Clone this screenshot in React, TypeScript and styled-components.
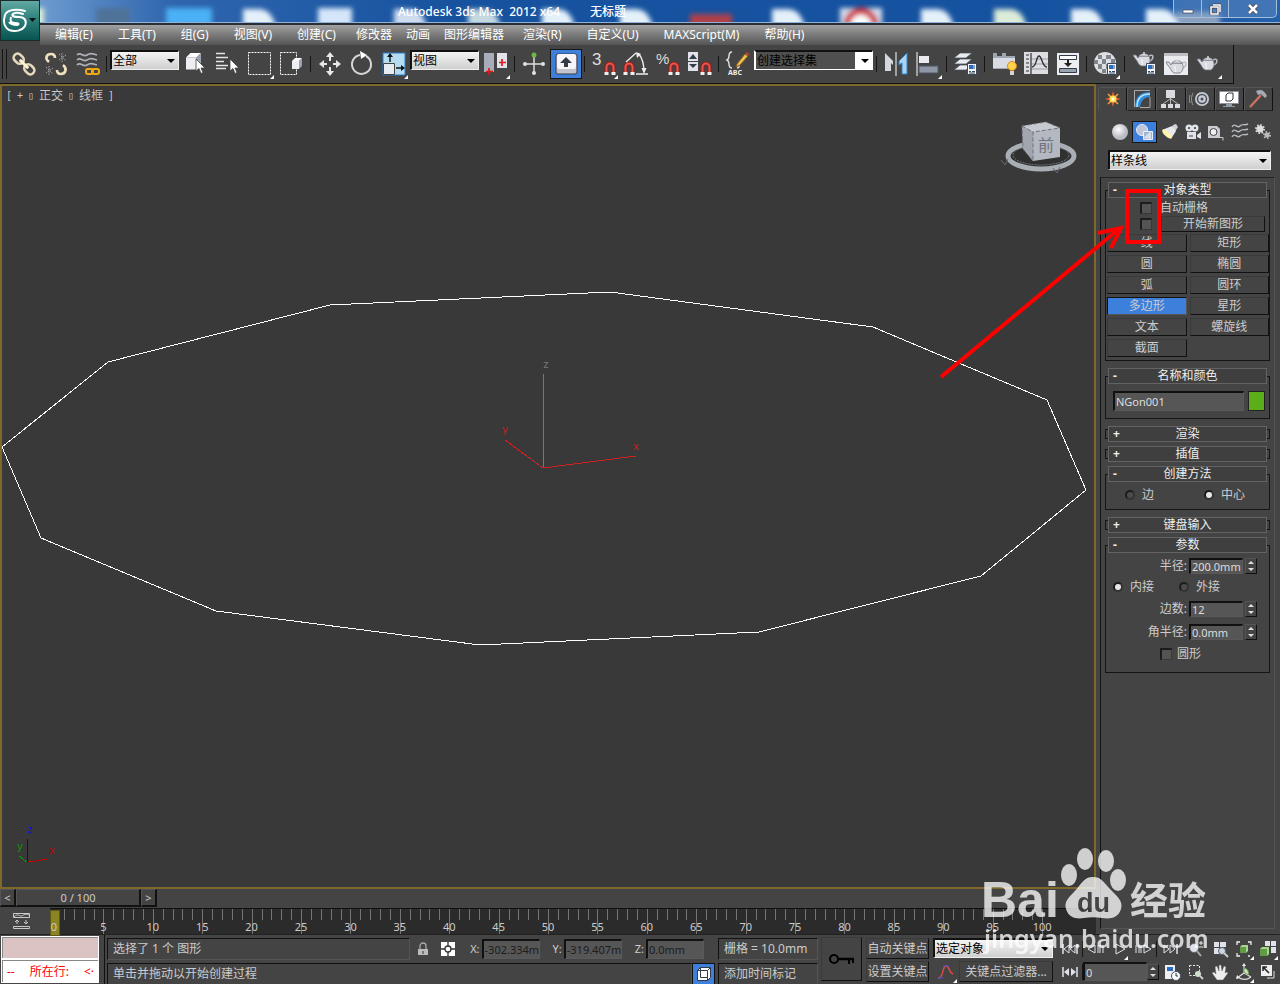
import React from 'react';
import styled, { createGlobalStyle, css } from 'styled-components';

const Global = createGlobalStyle`
  * { box-sizing: border-box; }
  body { margin: 0; background: #444; }
  body, button, input, select {
    font-family: "Noto Sans", "Noto Sans CJK SC", sans-serif;
    font-size: 12px;
    line-height: 16px;
    color: #ccc;
  }
  button, input, select { margin: 0; padding: 0; border: 0; border-radius: 0; outline: 0; }
  svg { display: block; flex: none; }
`;

/* ---------- frame ---------- */

const Page = styled.div`
  position: relative;
  display: flex;
  flex-direction: column;
  min-height: 100vh;
  min-width: 1280px;
  overflow: hidden;
  background: #444;
`;

const Header = styled.header`
  display: flex;
  align-items: flex-start;
  background: #444;
`;

const AppButton = styled.button`
  flex: none;
  width: 40px;
  height: 41px;
  padding: 1px;
  background: #1d2b2b;
`;

const HeaderBars = styled.div`
  flex: 1;
  min-width: 0;
`;

const TitleBar = styled.div`
  position: relative;
  display: flex;
  justify-content: space-between;
  height: 25px;
  overflow: hidden;
  border-bottom: 2px solid #2a2d33;
  background: linear-gradient(90deg, #6d9bcf 0, #2f66ae 130px, #17529f 420px, #1552a0 1000px, #2560aa 100%);
`;

const Backdrop = styled.svg`
  position: absolute;
  inset: 0;
  width: 100%;
  height: 23px;
  border-bottom: 1px solid #8fb4dc;
`;

const Title = styled.h1`
  position: relative;
  display: flex;
  gap: 30px;
  margin: 4px 0 0 358px;
  font-size: 12px;
  font-weight: 500;
  line-height: 16px;
  color: #fff;
  white-space: pre;
`;

const WindowButtons = styled.div`
  position: relative;
  display: flex;
  height: 18px;
  margin-right: 3px;
  border: 1px solid #a3bddb;
  border-top: 0;
  border-radius: 0 0 5px 5px;
  background: rgba(120, 160, 205, 0.35);
`;

const WindowButton = styled.button<{ $wide?: boolean }>`
  display: flex;
  align-items: center;
  justify-content: center;
  width: ${p => (p.$wide ? 48 : 27)}px;
  background: none;
  & + & { border-left: 1px solid #a3bddb; }
`;

const MenuBar = styled.nav`
  display: flex;
  height: 20px;
  padding-left: 3px;
  background: linear-gradient(#a2a2a2, #7d7d7d 45%, #555);
`;

const MenuItem = styled.button<{ $tight?: boolean }>`
  padding: ${p => (p.$tight ? '0 7px' : '0 13px 0 12px')};
  background: none;
  color: #fff;
  white-space: nowrap;
`;

/* ---------- toolbar ---------- */

const Toolbar = styled.div`
  display: flex;
  align-items: center;
  align-self: flex-start;
  height: 39px;
  padding: 0 9px 0 2px;
  border-right: 1px solid #111;
  border-bottom: 1px solid #111;
`;

const Grip = styled.span`
  width: 5px;
  height: 30px;
  border-left: 1px solid #161616;
  border-right: 1px solid #161616;
  margin-right: 1px;
`;

const ToolSep = styled.span`
  width: 6px;
  height: 16px;
  border-left: 2px solid transparent;
  border-right: 3px solid transparent;
  background: #161616 content-box;
  background-clip: padding-box;
`;

const ToolButton = styled.button<{ $on?: boolean }>`
  position: relative;
  display: flex;
  align-items: center;
  justify-content: center;
  width: 32px;
  height: 30px;
  background: none;
  ${p => p.$on && css`
    background: #3d80dc padding-box;
    border: 1px solid #161616;
  `}
`;

const Flyout = styled.span`
  position: absolute;
  right: 2px;
  bottom: 0;
  border-style: solid;
  border-width: 0 0 4px 4px;
  border-color: transparent transparent #fff transparent;
`;

const SelectBox = styled.span<{ $w: number; $h?: number; $dark?: boolean }>`
  position: relative;
  display: flex;
  flex: none;
  width: ${p => p.$w}px;
  height: ${p => p.$h ?? 20}px;
  border: 1px solid #eee;
  border-top: 2px solid #111;
  border-left: 2px solid #111;
  background: ${p => (p.$dark ? 'linear-gradient(90deg, #4f4f4f calc(100% - 17px), #fff calc(100% - 17px))' : 'linear-gradient(#f4f4f4, #cfcfcf)')};
  ${p => p.$dark && css`border-color: #111 #fff #fff #fff;`}
  &::after {
    content: '';
    position: absolute;
    right: 3px;
    top: 50%;
    margin-top: -2px;
    border: 4px solid transparent;
    border-top-color: #000;
    border-bottom: 0;
    pointer-events: none;
  }
`;

const Select = styled.select`
  appearance: none;
  width: 100%;
  padding-left: 1px;
  background: none;
  color: #000;
  line-height: 16px;
`;

const ToolSelect = styled(SelectBox)`
  margin: 0 1px 8px 0;
`;

/* ---------- workspace ---------- */

const Workspace = styled.main`
  display: flex;
  flex: 1;
`;

const Stage = styled.section`
  display: flex;
  flex-direction: column;
  flex: 1;
  min-width: 0;
`;

const Viewport = styled.div`
  position: relative;
  flex: 1;
  min-height: 400px;
  border: 2px solid #7e682a;
  background: #393939;
`;

const ViewportLabel = styled.div`
  position: relative;
  display: flex;
  gap: 5px;
  padding: 2px 4px;
  color: #c8c8c8;
`;

const Mono = styled.span`
  width: 6px;
  font-family: "DejaVu Sans Mono", monospace;
  font-size: 10px;
`;

const Scene = styled.svg`
  position: absolute;
  inset: 0;
  width: 100%;
  height: 100%;
  font-family: "Liberation Mono", monospace;
  font-size: 10px;
`;

const SliderRow = styled.div`
  display: flex;
  height: 19px;
  padding-bottom: 1px;
  font-size: 11px;
`;

const SliderButton = styled.button<{ $w: number }>`
  width: ${p => p.$w}px;
  height: 18px;
  border: 1px solid #555;
  border-right: 2px solid #111;
  border-bottom: 2px solid #111;
  background: #444;
  font-size: 11px;
  line-height: 15px;
`;

const Track = styled.div`
  display: flex;
  height: 26px;
`;

const TrackIcon = styled.button`
  display: flex;
  align-items: center;
  width: 50px;
  padding-left: 12px;
  background: none;
`;

const Ruler = styled.div`
  display: grid;
  grid-template-columns: repeat(101, 1fr);
  flex: 1;
  padding: 0 44px 0 4px;
  border-top: 1px solid #111;
  background: #2b2b2b;
  font-size: 11px;
`;

const Tick = styled.span<{ $major?: boolean; $head?: boolean }>`
  position: relative;
  min-width: 0;
  &::before {
    content: '';
    position: absolute;
    left: 0;
    top: 0;
    width: 1px;
    height: ${p => (p.$major ? 25 : 11)}px;
    background: #757575;
  }
  ${p => p.$head && css`
    &::before {
      left: -4px;
      top: 1px;
      width: 8px;
      height: 24px;
      background: #8c8322;
      border: 1px solid #5f5816;
    }
  `}
`;

const TickLabel = styled.span`
  position: absolute;
  top: 10px;
  left: -15px;
  width: 30px;
  text-align: center;
`;

/* ---------- command panel ---------- */

const Panel = styled.aside`
  display: flex;
  flex-direction: column;
  flex: none;
  width: 184px;
  padding: 3px 0 5px 2px;
`;

const Tabs = styled.div`
  display: flex;
  padding-right: 7px;
  height: 24px;
`;

const Tab = styled.button<{ $on?: boolean }>`
  display: flex;
  align-items: center;
  justify-content: center;
  flex: 1;
  height: 24px;
  border: 1px solid #555;
  border-bottom-color: ${p => (p.$on ? '#444' : '#222')};
  border-right: 1px solid #111;
  border-radius: 3px 3px 0 0;
  background: #444;
`;

const Categories = styled.div`
  display: flex;
  margin: 10px 5px 0 10px;
`;

const Category = styled.button<{ $on?: boolean }>`
  display: flex;
  align-items: center;
  justify-content: center;
  flex: 1;
  height: 22px;
  background: none;
  ${p => p.$on && css`
    background: #3d80dc padding-box;
    border: 1px solid #161616;
  `}
`;

const PanelSelect = styled.div`
  display: flex;
  padding: 7px 0 7px 10px;
`;

const Rollouts = styled.div`
  flex: 1;
  display: flex;
  flex-direction: column;
  gap: 4px;
  margin: 0 5px 0 2px;
  padding: 4px 4px 0 4px;
  border: 1px solid #555;
  border-left-color: #111;
  border-top-color: #222;
`;

const RolloutBox = styled.section<{ $open?: boolean }>`
  padding-bottom: ${p => (p.$open ? 3 : 0)}px;
`;

const RolloutHead = styled.button`
  position: relative;
  display: flex;
  align-items: center;
  width: calc(100% - 6px);
  height: 16px;
  margin: 0 3px;
  padding: 0 4px;
  border: 1px solid #636363;
  background: #3f3f3f;
  color: #eee;
  line-height: 14px;
`;

const Sign = styled.span`
  width: 8px;
  font-weight: 700;
  text-align: left;
`;

const HeadText = styled.span`
  flex: 1;
  margin-right: 8px;
  text-align: center;
`;

const Frame = styled.div<{ $open?: boolean }>`
  border: 1px solid #151515;
  ${p => (p.$open
    ? css`margin-top: -8px; padding-top: 8px;`
    : css`height: 10px; margin: -13px 0 3px;`)}
`;

const Check = styled.input.attrs({ type: 'checkbox' })`
  appearance: none;
  flex: none;
  width: 12px;
  height: 12px;
  border: 2px solid #1c1c1c;
  border-right: 1px solid #383838;
  border-bottom: 1px solid #383838;
  background: #545454;
`;

const Radio = styled.input.attrs({ type: 'radio' })`
  appearance: none;
  flex: none;
  width: 10px;
  height: 10px;
  border: 2px solid #1c1c1c;
  border-right-color: #333;
  border-bottom-color: #333;
  border-radius: 50%;
  background: #4c4c4c;
  &:checked { background: #e8e8e8; }
`;

const Line = styled.div<{ $h: number; $left?: number; $gap?: number }>`
  display: flex;
  align-items: center;
  gap: ${p => p.$gap ?? 8}px;
  height: ${p => p.$h}px;
  padding-left: ${p => p.$left ?? 0}px;
`;

const Raised = css`
  border: 1px solid #3a3a3a;
  border-right: 1px solid #111;
  border-bottom: 1px solid #111;
  background: #444;
  color: #ccc;
  white-space: nowrap;
`;

const WideButton = styled.button`
  ${Raised}
  width: 104px;
  height: 16px;
  line-height: 12px;
`;

const TypeGrid = styled.div`
  display: grid;
  grid-template-columns: 1fr 1fr;
  gap: 3px 3px;
  padding: 2px 0 3px 1px;
`;

const TypeButton = styled.button<{ $on?: boolean }>`
  ${Raised}
  height: 18px;
  line-height: 14px;
  ${p => p.$on && css`
    border: 1px solid #111;
    border-right-color: #555;
    border-bottom: 1px solid #555;
    background: #3d80dc;
  `}
`;

const NameRow = styled.div`
  display: flex;
  gap: 4px;
  padding: 6px 4px 7px 7px;
`;

const Field = styled.input<{ $w?: number; $h?: number; $dim?: boolean }>`
  ${p => (p.$w ? css`flex: none; width: ${p.$w}px;` : css`flex: 1; min-width: 0;`)}
  height: ${p => p.$h ?? 16}px;
  padding-left: 1px;
  border: 1px solid #5a5a5a;
  border-top: 2px solid #111;
  border-left: 2px solid #111;
  background: #565656;
  color: ${p => (p.$dim ? '#1c1c1c' : '#ddd')};
  font-size: 11px;
  line-height: 13px;
`;

const Swatch = styled.button`
  width: 17px;
  height: 20px;
  border: 1px solid #222;
  background: #5aae1a;
`;

const RadioRow = styled.div<{ $pad: string; $second: number }>`
  display: grid;
  grid-template-columns: ${p => p.$second}px 1fr;
  padding: ${p => p.$pad};
`;

const Option = styled.label`
  display: flex;
  align-items: center;
  gap: 7px;
  height: 18px;
`;

const Param = styled.label<{ $h: number }>`
  display: flex;
  align-items: center;
  justify-content: flex-end;
  gap: 2px;
  height: ${p => p.$h}px;
  padding-right: 12px;
`;

const SpinBox = styled.span<{ $h: number }>`
  display: grid;
  grid-template-rows: 1fr 1fr;
  flex: none;
  width: 12px;
  height: ${p => p.$h}px;
  border: 1px solid #555;
  border-right-color: #111;
  border-bottom-color: #111;
`;

const Arrow = styled.button<{ $down?: boolean }>`
  display: flex;
  align-items: center;
  justify-content: center;
  min-height: 0;
  background: none;
  &::before {
    content: '';
    border: 3px solid transparent;
    ${p => (p.$down ? css`border-top-color: #ddd; border-bottom: 0;` : css`border-bottom-color: #ddd; border-top: 0;`)}
  }
`;

/* ---------- status bar ---------- */

const StatusBar = styled.footer`
  display: flex;
  height: 50px;
  padding-left: 1px;
  border-top: 1px solid #222;
`;

const Listener = styled.div`
  display: grid;
  grid-template-rows: 21px 22px;
  gap: 2px;
  width: 98px;
  height: 47px;
  margin: 1px 5px 0 0;
  padding: 1px;
  background: #fff;
`;

const ListenerLine = styled.div<{ $pink?: boolean }>`
  display: flex;
  align-items: center;
  justify-content: space-between;
  padding: 0 4px;
  border-top: 1px solid #888;
  border-left: 1px solid #888;
  background: ${p => (p.$pink ? '#dcc3c3' : '#fff')};
  color: #f00;
  line-height: 14px;
`;

const Messages = styled.div`
  display: grid;
  grid-template-rows: 22px 22px;
  gap: 3px;
  flex: 1;
  min-width: 0;
  padding: 3px 3px 0 2px;
  border-left: 1px solid #111;
`;

const MessageRow = styled.div`
  display: flex;
  align-items: center;
  min-width: 0;
`;

const Sunken = styled.div`
  flex: 1;
  height: 22px;
  padding: 0 5px;
  border: 1px solid #555;
  border-top: 1px solid #111;
  border-left: 1px solid #111;
  line-height: 19px;
  white-space: nowrap;
`;

const Coord = styled.label`
  display: flex;
  align-items: center;
  gap: 2px;
  margin-left: 13px;
  font-size: 11px;
`;

const IconSlot = styled.button<{ $w: number; $on?: boolean }>`
  position: relative;
  display: flex;
  align-items: center;
  justify-content: center;
  flex: none;
  width: ${p => p.$w}px;
  height: 22px;
  background: none;
  ${p => p.$on && css`
    background: #3d80dc padding-box;
    border: 1px solid #111;
  `}
`;

const Stack = styled.div<{ $w: number; $left: number }>`
  display: grid;
  grid-template-rows: 21px 21px;
  gap: 2px;
  flex: none;
  width: ${p => p.$w}px;
  margin: 3px 0 0 ${p => p.$left}px;
`;

const GridInfo = styled(Stack)`
  grid-template-rows: 22px 22px;
  gap: 3px;
`;

const KeyButton = styled.button`
  ${Raised}
  display: flex;
  align-items: center;
  justify-content: center;
  flex: none;
  width: 41px;
  height: 44px;
  margin: 2px 0 0 3px;
`;

const StatusButton = styled.button`
  ${Raised}
  height: 21px;
  flex: 1;
`;

const StackRow = styled.div`
  display: flex;
  align-items: center;
`;

const Bar = styled.span`
  flex: none;
  width: 1px;
  height: 16px;
  background: #161616;
`;

/* ---------- overlays ---------- */

const Callout = styled.svg`
  position: absolute;
  top: 180px;
  right: 0;
  pointer-events: none;
`;

const Watermark = styled.svg`
  position: absolute;
  right: 60px;
  bottom: 20px;
  pointer-events: none;
  opacity: 0.76;
`;

/* ---------- drawings ---------- */

const L = '#dfe2e8';
const D = '#5b6472';

const Svg = ({ s = 28, children }: { s?: number; children: React.ReactNode }) => (
  <svg width={s} height={s} viewBox={`0 0 ${s} ${s}`} fill="none">{children}</svg>
);

const Magnet = ({ x = 15, y = 11 }) => (
  <g transform={`translate(${x} ${y})`}>
    <path d="M2.500 12V6a3.500 3.500 0 0 1 7 0V12" stroke="#8e1c1c" strokeWidth="4" />
    <path d="M2.500 12V6a3.500 3.500 0 0 1 7 0V12" stroke="#e8564c" strokeWidth="2" />
    <path d="M.5 11h4v3h-4zM7.500 11h4v3h-4z" fill="#eee" />
  </g>
);

const Pot = ({ x = 0, y = 0 }) => (
  <g transform={`translate(${x} ${y})`}>
    <path d="M16 5c5-3 5 3 1 5" stroke="#b9bcc2" strokeWidth="1.500" />
    <path d="M6 5h10c2 4 1 8-2 10H8C6 14 5 12 4 10L1 6 0 4h3l2 3z" fill="#d9dbe0" stroke="#70757f" strokeWidth=".8" />
    <path d="M6 5c1-3 9-3 10 0z" fill="#f4f4f6" stroke="#70757f" strokeWidth=".8" />
    <circle cx="11" cy="2" r="1" fill="#d9dbe0" />
    <path d="M9 8c0 3 0 4 1 6" stroke="#fff" />
  </g>
);

const Card = ({ x = 15, y = 13 }) => (
  <g transform={`translate(${x} ${y})`}>
    <path d="M.5.5h9v11h-9z" fill="#f3f5f8" stroke="#3d4958" />
    <path d="M2 2h4v4H2z" fill="#2b6cc0" />
    <path d="M7 2v4M2 8.500h2M5 8.500h3M2 10h6" stroke="#33475e" />
  </g>
);

const Cursor = ({ x = 13, y = 8 }) => (
  <path transform={`translate(${x} ${y})`} d="M0 0v12l3-2.500 2 5 2-1-2-4.500h4z" fill="#fff" stroke="#444" strokeWidth=".8" />
);

const Cube = ({ x, y, s }: { x: number; y: number; s: number }) => (
  <g transform={`translate(${x} ${y}) scale(${s})`}>
    <path d="M0 3h7v8H0z" fill="#eceef2" />
    <path d="M0 3l3-3h7L7 3z" fill="#fff" />
    <path d="M7 3l3-3v8l-3 3z" fill="#9ba3b3" />
  </g>
);

const icons: Record<string, React.ReactNode> = {
  link: <Svg><g transform="rotate(45 14 14)" stroke="#e6d9bd"><rect x="1" y="10" width="11" height="8" rx="4" strokeWidth="2.600" /><rect x="16" y="10" width="11" height="8" rx="4" strokeWidth="2.600" /><path d="M8 14h12" stroke="#fff3d5" strokeWidth="3" /></g></Svg>,
  unlink: <Svg><path d="M7 12c-5-4-2-8 2-8 3 0 4 2 4 4" stroke="#f0e0be" strokeWidth="2.600" /><path d="M21 15c5 4 2 9-2 9-3 0-4-2-4-4" stroke="#f0e0be" strokeWidth="2.600" /><path d="M17 4l7 7M20 3v9M24 5l-7 5M4 17l7 7M7 16v9M11 18l-7 5" stroke="#a5a5a5" strokeDasharray="1.500 1" /></Svg>,
  bind: <Svg>{[5, 10, 15].map(y => <path key={y} d={`M3 ${y}c4-4 6 3 10 0s6-1 10 0`} stroke="#aeb2b8" strokeWidth="1.600" />)}<rect x="12" y="19" width="7" height="5" rx="2" stroke="#f2a90f" strokeWidth="2" /><rect x="18" y="19" width="7" height="5" rx="2" stroke="#f2a90f" strokeWidth="2" /></Svg>,
  select: <Svg><Cube x={4} y={3} s={1.5} /><Cursor x={14} y={9} /></Svg>,
  byName: <Svg><path d="M2 3.500h9M2 7.500h12M2 11.500h8M2 15.500h12M2 18.500h10" stroke="#e4e4e4" strokeWidth="1.300" /><Cursor x={16} y={9} /></Svg>,
  rect: <Svg><rect x="2.500" y="2.500" width="22" height="22" stroke="#fff" strokeDasharray="2 1" /></Svg>,
  window: <Svg><rect x="2.500" y="2.500" width="16" height="22" stroke="#fff" strokeDasharray="2 1" /><Cube x={14} y={8} s={1} /></Svg>,
  move: <Svg><path d="M14 2l4 5h-3v4h-2V7h-3zM14 26l4-5h-3v-4h-2v4h-3zM3 14l5-4v3h3v2H8v3zM25 14l-5-4v3h-3v2h3v3z" fill="#e6e8ec" /></Svg>,
  rotate: <Svg><path d="M18 6a9.500 9.500 0 1 1-6-1" stroke="#d6d6d6" strokeWidth="2" /><path d="M12 1l7 4-6 4z" fill="#fff" /></Svg>,
  scale: <Svg><path d="M3 3h22v22H3z" fill="#b5ddf2" stroke="#2a7bc8" /><path d="M3.500 13.500h11v11h-11z" fill="#e7ecf3" stroke="#444" /><path d="M10 12V6M16 18h6" stroke="#111" strokeWidth="1.400" /><path d="M10 3l3 4H7zM25 18l-4 3v-6z" fill="#111" /></Svg>,
  pivot: <Svg><path d="M2 3h10v19H2z" fill="#a8adb9" /><path d="M15 3h10v15H15z" fill="#e2e4ea" /><path d="M7 18v7M4 21.500h7M20 9v7M17 12.500h7" stroke="#e01818" strokeWidth="1.700" /></Svg>,
  manip: <Svg><path d="M14 6v16M5 14h18" stroke="#ddd" strokeWidth="1.500" /><circle cx="14" cy="5" r="2.500" fill="#6fb544" /><circle cx="5" cy="14" r="2" fill={L} /><circle cx="23" cy="14" r="2" fill={L} /><circle cx="14" cy="23" r="2" fill={L} /></Svg>,
  keyboard: <Svg><rect x="4" y="4" width="21" height="20" rx="2" fill="#c1c4cc" stroke="#333b48" /><rect x="5" y="4" width="19" height="15" rx="2" fill="#f5f5f8" /><path d="M14 7l6 6h-4v4h-4v-4H8z" fill="#333b48" /></Svg>,
  snap: <Svg><text x="2" y="15" fill="#ddd" fontSize="17" fontFamily="Liberation Sans, sans-serif">3</text><Magnet x={14} y={11} /></Svg>,
  angle: <Svg><Magnet x={1} y={11} /><path d="M4 12L14 3M14 24h12M17 4c3 4 5 10 5 18" stroke="#eee" strokeWidth="1.300" /><path d="M14 2l5 2-4 4zM19.500 18h5l-2.500 6z" fill="#eee" /></Svg>,
  percent: <Svg><text x="2" y="14" fill="#ddd" fontSize="15" fontFamily="Liberation Sans, sans-serif">%</text><Magnet x={14} y={11} /></Svg>,
  spinner: <Svg><path d="M2 2h10v9H2zM2 12h10v9H2z" fill="#e0e2e8" /><path d="M7 4l4 5H3zM7 18l4-4H3z" fill="#333b48" /><Magnet x={14} y={11} /></Svg>,
  abc: <Svg><path d="M8 2c-3 0-3 2-3 4s0 3-2 4c2 1 2 2 2 4s0 4 3 4M13 18c3 0 2-3 2-5" stroke="#ddd" strokeWidth="1.500" /><path d="M13 14L21 4l3 2-8 9-4 2z" fill="#eec24c" stroke="#8b5a1c" /><path d="M21 4l1.500-2 3 2L24 6z" fill="#b14a35" /><text x="4" y="25" fill="#eee" fontSize="7" fontWeight="700">ABC</text></Svg>,
  mirror: <Svg><path d="M3 3l8 8v4l-2-2v8H3z" fill="#d5d7de" /><path d="M14 2v24" stroke="#fff" /><path d="M25 3l-8 8v4l3-2v11h5z" fill="#a9d3f0" stroke="#2f83cc" /></Svg>,
  align: <Svg><path d="M3 2v24" stroke="#fff" /><path d="M5 6h10v7H5z" fill="#e9ebef" /><path d="M5 16h19v7H5z" fill="#8f96a5" stroke="#4e5665" /></Svg>,
  layers: <Svg>{[15, 9, 3].map(y => <path key={y} d={`M2 ${y + 5}l6-5h12l-6 5z`} fill="#e9ebef" stroke="#444b57" strokeWidth=".7" />)}<Card x={15} y={13} /></Svg>,
  ribbon: <Svg><path d="M3 3h4v3h5V3h4v3h9v13H3z" fill="#a0a6b2" /><path d="M3 8h22v10H3z" fill="#d9dce2" /><circle cx="22" cy="16" r="4.500" fill="#ffd34d" stroke="#d98a1c" /><path d="M20 21h4v4h-4z" fill="#d5d5d5" /></Svg>,
  curve: <Svg><path d="M2 2h24v22H2z" fill="#dcdee2" /><path d="M9 3v21M9 9h17M9 14h17M9 19h17" stroke="#9b9da3" /><path d="M4 5h3M4 9h3M4 13h3M4 17h3M4 21h3M9 3v21" stroke="#2c2c2c" /><path d="M10 17c5 0 4-11 7-11s3 11 8 11" stroke="#2a2a2a" strokeWidth="1.300" /></Svg>,
  schematic: <Svg><path d="M3 3h22v22H3z" fill="#eceef1" /><path d="M5.500 5.500h17v4h-17zM5.500 18.500h17v4h-17z" fill="#fff" stroke="#333b48" /><path d="M6 19h16v3H6z" fill="#9aa3b0" /><path d="M14 10v4" stroke="#222" strokeWidth="2" /><path d="M14 17l4-4h-8z" fill="#222" /></Svg>,
  material: <Svg><circle cx="13" cy="13" r="11" fill="#dddfe3" /><path d="M6 5h4v4H6zM14 5h5v4h-5zM2 10h4v4H2zM10 9h4v5h-4zM19 9h4v5h-4zM6 14h4v5H6zM14 14h5v5h-5zM10 19h4v4h-4z" fill="#7f848d" /><Card /></Svg>,
  setup: <Svg><Pot x={3} y={1} /><Card x={16} y={13} /></Svg>,
  frame: <Svg><path d="M2 3h24v22H2z" fill="#ebecef" /><path d="M2 3h24v3H2z" fill="#bfc0c4" /><Pot x={4} y={8} /></Svg>,
  render: <Svg><Pot x={3} y={5} /></Svg>,

  create: <Svg s={22}><path d="M11 3l2 6 6 2-6 2-2 6-2-6-6-2 6-2z" fill="#e2572f" /><path d="M6 6l10 10M16 6L6 16" stroke="#f1a13b" strokeWidth="1.500" /><circle cx="11" cy="11" r="3.500" fill="#ffdc4e" /><circle cx="11" cy="11" r="1.500" fill="#fff" /></Svg>,
  modify: <Svg s={22}><path d="M4 19C4 9 9 4 19 4v5c-6 0-9 4-10 10z" fill="#2f8edb" /><path d="M6 19C6 10 10 6 19 6" stroke="#bfe2fa" strokeWidth="1.500" /><path d="M3.500 19V2.500H19M9 19.500h10V9" stroke="#a9a9a9" /></Svg>,
  hierarchy: <Svg s={22}><path d="M6 2h9v8H6z" fill="#d9dbe0" /><path d="M10.500 10v6M10 11l-7 5M11 11l7 5" stroke="#bbb" /><path d="M1 16h5v4H1zM8 16h5v4H8zM15 16h5v4h-5z" fill="#d9dbe0" /></Svg>,
  motion: <Svg s={22}><circle cx="13" cy="11" r="7" fill="#c9ccd3" /><circle cx="13" cy="11" r="4.500" stroke="#4a505b" strokeWidth="1.500" /><circle cx="13" cy="11" r="1.500" fill="#4a505b" /><path d="M4 5c-2 4-2 8 0 12M1 7c-1 3-1 5 0 8" stroke="#999" /></Svg>,
  display: <Svg s={22}><path d="M1.500 3.500h19v12h-19z" fill="#fff" stroke="#8d929d" /><path d="M8 7l2-2h5v6l-2 2H8z" stroke="#333" /><path d="M8 16h6v2h3v1H5v-1h3z" fill="#9298a4" /></Svg>,
  utilities: <Svg s={22}><path d="M3 19L14 7" stroke="#c97260" strokeWidth="2.500" /><path d="M9 3c5-2 8-1 11 5l-2 2-4-4-3 1z" fill="#a5aab3" /></Svg>,

  geometry: <Svg s={20}><defs><radialGradient id="ball" cx=".4" cy=".35"><stop offset="0" stopColor="#fff" /><stop offset="1" stopColor="#b9bcc3" /></radialGradient></defs><circle cx="10" cy="10" r="8" fill="url(#ball)" /></Svg>,
  shapes: <Svg s={20}><circle cx="8" cy="8" r="5.500" fill="#bcc6d6" stroke="#eef" /><path d="M9.500 9.500h9v8h-9z" fill="#9fb4d3" stroke="#eef" /><path d="M9 16l8-7v8z" fill="#d8deea" /></Svg>,
  lights: <Svg s={20}><path d="M12 8l2-5 3-1 2 3-4 6z" fill="#cfd3dc" /><path d="M3 8l10-4 4 5-5 8z" fill="#e8e9ec" /><ellipse cx="8" cy="12" rx="6" ry="2.500" transform="rotate(42 8 12)" fill="#fff3b0" /></Svg>,
  cameras: <Svg s={20}><circle cx="6" cy="6" r="3.500" fill={L} /><circle cx="12" cy="6" r="3.500" fill={L} /><path d="M4 10h9v7H4zM14 13l4-3v7l-4-2z" fill={L} /><circle cx="6" cy="6" r="1" fill="#333" /><circle cx="12" cy="6" r="1" fill="#333" /><path d="M6 14h4" stroke="#444" /></Svg>,
  helpers: <Svg s={20}><path d="M2 4h9l3 3v9H2z" fill="#c9ccd2" /><circle cx="7.500" cy="10" r="3.500" fill="#eee" stroke="#444" /><path d="M9 15.500h8v3" stroke="#ccc" /></Svg>,
  space: <Svg s={20}>{[4, 9, 14].map(y => <path key={y} d={`M2 ${y + 1}c3-5 5 2 8-1s4 0 8-2`} stroke="#b6bac0" strokeWidth="1.400" />)}</Svg>,
  systems: <Svg s={20}><circle cx="7" cy="7" r="3.500" fill="#ddd" /><circle cx="7" cy="7" r="4" stroke="#ddd" strokeWidth="2" strokeDasharray="1.500 1.600" /><circle cx="14" cy="13" r="2.500" fill="#bbb" /><circle cx="14" cy="13" r="3" stroke="#bbb" strokeWidth="2" strokeDasharray="1.500 1.600" /></Svg>,

  lock: <Svg s={16}><path d="M5 8V5a3 3 0 0 1 6 0v3" stroke="#aaa" strokeWidth="1.300" /><path d="M3 8h10v6H3z" fill="#bbb" /><path d="M8 10v3" stroke="#333" /></Svg>,
  offset: <Svg s={16}><path d="M1 1h14v14H1z" fill="#fff" /><circle cx="8" cy="8" r="3" stroke="#333" strokeWidth="1.300" /><path d="M8 1v4M8 11v4M1 8h4M11 8h4" stroke="#333" strokeWidth="1.300" /></Svg>,
  isolate: <Svg s={16}><path d="M1.500 4.500l3-3h10v10l-3 3h-10z" fill="#fff" stroke="#333b48" /><path d="M4.500 4.500h7v7h-7z" stroke="#333b48" /><path d="M1.500 4.500h3l0-3M11.500 4.500l3-3M11.500 11.500v3" stroke="#333b48" /></Svg>,
  key: <svg width="28" height="14" viewBox="0 0 28 14" fill="none"><circle cx="6" cy="7" r="4" stroke="#000" strokeWidth="2" /><path d="M10 7h16" stroke="#000" strokeWidth="2.500" /><path d="M21 7v5M25 7v4" stroke="#000" strokeWidth="2" /></svg>,
  tangent: <Svg s={18}><path d="M1 15c6 0 4-12 8-12s2 6 7 8" stroke="#e04848" strokeWidth="1.500" /><path d="M1 15h5M6 3h6" stroke="#3a58d0" /></Svg>,
  start: <Svg s={18}><path d="M2 4v10M16 4v10" stroke={L} strokeWidth="1.500" /><path d="M8 5v8L3 9zM14 5v8L9 9z" stroke={L} /></Svg>,
  prev: <Svg s={18}><path d="M8 5v8L1 9zM11 5v8M13 5v8M16 5v8" stroke={L} /></Svg>,
  play: <Svg s={18}><path d="M5 4v10l9-5z" stroke={L} /></Svg>,
  next: <Svg s={18}><path d="M10 5v8l7-4zM2 5v8M5 5v8M7 5v8" stroke={L} /></Svg>,
  end: <Svg s={18}><path d="M16 4v10" stroke={L} strokeWidth="1.500" /><path d="M3 5v8l5-4zM9 5v8l5-4z" stroke={L} /></Svg>,
  keyMode: <Svg s={18}><path d="M2 4v10M16 4v10" stroke={L} strokeWidth="1.500" /><path d="M8 5v8L3 9zM10 5v8l5-4z" fill={L} /></Svg>,
  time: <Svg s={18}><path d="M2 2h10v14H2z" fill="#eee" /><path d="M4 4h6v4H4z" fill="#2b6cc0" /><circle cx="13" cy="13" r="4.500" fill="#fff" stroke="#456" /><path d="M13 10v3h2" stroke="#234" /></Svg>,
  zoom: <Svg s={18}><circle cx="7" cy="8" r="4.500" fill={L} stroke={D} /><path d="M10 11l4 5" stroke="#aaa" strokeWidth="2" /><path d="M12 3h4M14 1v4M12 7h4" stroke="#eee" /></Svg>,
  zoomAll: <Svg s={18}><path d="M3 2h5v5H3zM9 2h6v5H9zM3 8h5v6H3z" fill={L} /><circle cx="11" cy="11" r="3.500" fill="#cfd6e2" stroke={D} /><path d="M13 13l4 4" stroke="#ccc" strokeWidth="2" /></Svg>,
  extents: <Svg s={18}><path d="M2 5V2h3M13 2h3v3M2 13v3h3M13 16h2" stroke="#eee" strokeWidth="1.300" /><path d="M5 7l2-2h6v6l-2 2H5z" fill="#a9d494" /><path d="M5 7h6v6H5z" fill="#5f9c45" /></Svg>,
  extentsAll: <Svg s={18}><path d="M6 1h5v5H6zM12 1h5v5h-5zM12 7h5v6h-5z" fill={L} /><path d="M1 9l2-2h7v7l-2 2H1z" fill="#a7d688" /><path d="M1 9h7v7H1z" fill="#5f9c45" /></Svg>,
  region: <Svg s={18}><rect x="2.500" y="2.500" width="10" height="10" stroke="#eee" strokeDasharray="2 1.500" /><circle cx="11" cy="11" r="3" fill="#cfe0cf" /><path d="M13 13l3 3" stroke="#ccc" strokeWidth="2" /></Svg>,
  pan: <Svg s={18}><path d="M6 17L1 10l2-1 2 2-1-7 2-1 2 5V2h2l1 6 2-5 2 1-1 6 2-1 1 1-5 7z" fill="#eee" stroke="#666" strokeWidth=".5" /></Svg>,
  orbit: <Svg s={18}><path d="M9 2v8M9 10l-7 5M9 10l7 4M3 14c4 3 9 3 13 0" stroke="#ddd" strokeWidth="1.200" /><path d="M9 5a5 5 0 0 1 4 7l-4-3z" fill="#cfe8c0" stroke="#6ea153" /><path d="M9 0l2 3H7zM1 16l1-4 3 3z" fill="#eee" /></Svg>,
  maximize: <Svg s={18}><path d="M2 2h11v11H2z" fill="#eee" /><path d="M4 4l6 6M4 8V4h4" stroke="#222" strokeWidth="1.500" /><path d="M15 8v7H8" stroke="#ddd" /></Svg>,
};

const Tool = ({ name, label, on, fly }: { name: string; label: string; on?: boolean; fly?: boolean }) => (
  <ToolButton $on={on} aria-label={label}>{icons[name]}{fly && <Flyout />}</ToolButton>
);

const Mini = ({ name, label, w = 24, fly, on }: { name: string; label: string; w?: number; fly?: boolean; on?: boolean }) => (
  <IconSlot $w={w} $on={on} aria-label={label}>{icons[name]}{fly && <Flyout />}</IconSlot>
);

const Spinner = ({ h = 16 }: { h?: number }) => (
  <SpinBox $h={h}>
    <Arrow type="button" aria-label="增加" />
    <Arrow type="button" $down aria-label="减少" />
  </SpinBox>
);

const Rollout = ({ title, children }: { title: string; children?: React.ReactNode }) => (
  <RolloutBox $open={!!children}>
    <RolloutHead aria-expanded={!!children}>
      <Sign>{children ? '-' : '+'}</Sign>
      <HeadText>{title}</HeadText>
    </RolloutHead>
    <Frame $open={!!children}>{children}</Frame>
  </RolloutBox>
);

const page = (x: number, tint = '#e4f1fb') => (
  <path key={x} d={`M${x} 9h17c9 1 14 8 16 20H${x}z`} fill={tint} />
);

const TitleBackdrop = () => (
  <Backdrop preserveAspectRatio="xMinYMin slice">
    <defs><filter id="soft"><feGaussianBlur stdDeviation="2.500" /></filter></defs>
    <g filter="url(#soft)">
      <path d="M-8 8H4v18H-8z" fill="#dff0d8" />
      <path d="M56 8h34v20H56z" fill="#4f7299" />
      <path d="M126 8h46v18h-46z" fill="#4bb0f5" />
      <path d="M278 8h34v20h-34z" fill="#d5e6fa" />
      <path d="M650 14h42v14h-42z" fill="#b04048" />
      <path d="M800 8h42v20h-42z" fill="#d5dfee" />
      <circle cx="821" cy="25" r="14" stroke="#cf3b46" strokeWidth="7" fill="#fff" />
      <path d="M1136 12h44v14h-44z" fill="#8aa0bd" />
      {page(203)}
      {page(354, '#cfdcf0')}
      {page(428, '#c3d8df')}
      {page(502)}
      {page(580)}
      {page(732)}
      {page(881)}
      {page(954, '#dcecd9')}
      {page(1031)}
      {page(1106)}
    </g>
  </Backdrop>
);

const ViewCube = () => (
  <g>
    <ellipse cx="1041" cy="156" rx="33" ry="13" fill="#303030" stroke="#a9adb4" strokeWidth="5" />
    <ellipse cx="1041" cy="155" rx="28" ry="10" fill="none" stroke="#777b82" strokeDasharray="2 1" />
    <path d="M1022 126l24-4 14 6v29l-27 4-10-13z" fill="#b4b8c0" />
    <path d="M1022 126l24-4 14 6-27 4z" fill="#c6c9d0" />
    <path d="M1022 126l11 6v29l-10-12z" fill="#a2a6af" />
    <path d="M1022 126l11 6v29l-10-12zM1022 126l24-4 14 6-27 4" fill="none" stroke="#6e727b" strokeDasharray="4 2" />
    <text x="1038" y="151" fontSize="16" fill="#6f747e" fontFamily="Noto Sans CJK SC, sans-serif">前</text>
    <path d="M1001 160l4 5 3-6M1053 168l4 5 3-6" stroke="#666b74" fill="none" />
  </g>
);

const menus: [string, boolean?][] = [
  ['编辑(E)'], ['工具(T)'], ['组(G)'], ['视图(V)'], ['创建(C)'], ['修改器', true],
  ['动画', true], ['图形编辑器', true], ['渲染(R)'], ['自定义(U)'], ['MAXScript(M)'], ['帮助(H)'],
];

const shapeTypes = ['线', '矩形', '圆', '椭圆', '弧', '圆环', '多边形', '星形', '文本', '螺旋线', '截面'];

export default function App() {
  return (
    <Page>
      <Global />
      <Header>
        <AppButton aria-label="应用程序">
          <svg width="38" height="39" viewBox="0 0 38 39" fill="none">
            <defs><linearGradient id="teal" x2="0" y2="1"><stop stopColor="#62aaa3" /><stop offset=".5" stopColor="#2b7c78" /><stop offset="1" stopColor="#075451" /></linearGradient></defs>
            <path d="M0 0h38v39H0z" fill="url(#teal)" />
            <path d="M24 10C17 8 6 8 4 14c-2 6-1 12 4 15 6 2 13 1 16-4 2-5 0-9-6-9-5 0-8-1-6-3 2-2 7-1 10 0" stroke="#fff" strokeWidth="2" strokeLinecap="round" />
            <path d="M10 16c-1 4 0 6 4 6 3 0 5 1 2 2-3 0-6 0-8-3" stroke="#fff" strokeWidth="2" />
            <path d="M28 17h7l-3.500 4z" fill="#0a1414" />
          </svg>
        </AppButton>
        <HeaderBars>
          <TitleBar>
            <TitleBackdrop />
            <Title><span>Autodesk 3ds Max  2012 x64</span><span>无标题</span></Title>
            <WindowButtons>
              <WindowButton aria-label="最小化"><svg width="12" height="12"><path d="M1 7h10v3H1z" fill="#fff" stroke="#445" strokeWidth=".7" /></svg></WindowButton>
              <WindowButton aria-label="还原"><svg width="12" height="12" fill="none"><path d="M4 2h7v7M2 4h7v7H2z" stroke="#445" strokeWidth="3" /><path d="M4 2h7v7M2 4h7v7H2z" stroke="#fff" strokeWidth="1.500" /></svg></WindowButton>
              <WindowButton $wide aria-label="关闭"><svg width="12" height="12"><path d="M2 2l8 8M10 2l-8 8" stroke="#445" strokeWidth="4" /><path d="M2 2l8 8M10 2l-8 8" stroke="#fff" strokeWidth="2.500" /></svg></WindowButton>
            </WindowButtons>
          </TitleBar>
          <MenuBar>
            {menus.map(([t, tight]) => <MenuItem key={t} $tight={tight}>{t}</MenuItem>)}
          </MenuBar>
        </HeaderBars>
      </Header>

      <Toolbar>
        <Grip />
        <Tool name="link" label="选择并链接" />
        <Tool name="unlink" label="取消链接" />
        <Tool name="bind" label="绑定到空间扭曲" />
        <ToolSep />
        <ToolSelect $w={69}><Select aria-label="选择过滤器"><option>全部</option></Select></ToolSelect>
        <Tool name="select" label="选择对象" />
        <Tool name="byName" label="按名称选择" />
        <Tool name="rect" label="矩形选择区域" fly />
        <Tool name="window" label="窗口/交叉" />
        <ToolSep />
        <Tool name="move" label="选择并移动" />
        <Tool name="rotate" label="选择并旋转" />
        <Tool name="scale" label="选择并缩放" fly />
        <ToolSelect $w={69}><Select aria-label="参考坐标系"><option>视图</option></Select></ToolSelect>
        <Tool name="pivot" label="使用轴点中心" fly />
        <ToolSep />
        <Tool name="manip" label="选择并操纵" />
        <Tool name="keyboard" label="键盘快捷键覆盖切换" on />
        <ToolSep />
        <Tool name="snap" label="捕捉开关" fly />
        <Tool name="angle" label="角度捕捉" />
        <Tool name="percent" label="百分比捕捉" />
        <Tool name="spinner" label="微调器捕捉" />
        <ToolSep />
        <Tool name="abc" label="编辑命名选择集" />
        <ToolSelect $w={119} $dark><Select aria-label="命名选择集"><option>创建选择集</option></Select></ToolSelect>
        <ToolSep />
        <Tool name="mirror" label="镜像" />
        <Tool name="align" label="对齐" fly />
        <ToolSep />
        <Tool name="layers" label="层管理器" />
        <ToolSep />
        <Tool name="ribbon" label="石墨建模工具" />
        <Tool name="curve" label="曲线编辑器" />
        <Tool name="schematic" label="图解视图" />
        <ToolSep />
        <Tool name="material" label="材质编辑器" fly />
        <ToolSep />
        <Tool name="setup" label="渲染设置" />
        <Tool name="frame" label="渲染帧窗口" />
        <Tool name="render" label="渲染产品" fly />
      </Toolbar>

      <Workspace>
        <Stage>
          <Viewport>
            <Scene viewBox="2 86 1092 801">
              <g fill="none" shapeRendering="crispEdges">
                <path d="M2 447L108 362 330 305 610 292 873 327 1047 400 1086 490 981 576 759 632 480 645 216 611 41 538z" stroke="#fff" />
                <path d="M543.500 468V374" stroke="#777" />
                <path d="M505 440l38 28 93-12" stroke="#d02020" />
                <path d="M27.500 862v-23" stroke="#0000c8" />
                <path d="M27 862l-8-6" stroke="#009000" />
                <path d="M28 862l20-3" stroke="#c80000" />
              </g>
              <text x="543" y="368" fill="#777">z</text>
              <text x="502" y="433" fill="#d02020">y</text>
              <text x="633" y="450" fill="#d02020">x</text>
              <text x="27" y="833" fill="#1010e0">z</text>
              <text x="17" y="850" fill="#00a000">y</text>
              <text x="49" y="854" fill="#c80000">x</text>
              <ViewCube />
            </Scene>
            <ViewportLabel>
              <Mono>[</Mono><Mono>+</Mono><Mono>▯</Mono><span>正交</span><Mono>▯</Mono><span>线框</span><Mono>]</Mono>
            </ViewportLabel>
          </Viewport>
          <SliderRow>
            <SliderButton $w={16} aria-label="上一帧">&lt;</SliderButton>
            <SliderButton $w={125}>0 / 100</SliderButton>
            <SliderButton $w={16} aria-label="下一帧">&gt;</SliderButton>
          </SliderRow>
          <Track>
            <TrackIcon aria-label="打开迷你曲线编辑器">
              <svg width="20" height="18" viewBox="0 0 20 18" fill="none" stroke="#c8c8c8">
                <path d="M1.500 1.500h16v4h-16zM1.500 14.500h16v2h-16z" />
                <path d="M2 5c4-4 5-1 7-1s4-3 8-1M5 12V8M3 10l2-2 2 2M14 8v4M12 10l2 2 2-2" />
              </svg>
            </TrackIcon>
            <Ruler>
              {Array.from({ length: 101 }, (_, i) => (
                <Tick key={i} $major={i % 5 === 0} $head={i === 0}>
                  {i % 5 === 0 && <TickLabel>{i}</TickLabel>}
                </Tick>
              ))}
            </Ruler>
          </Track>
        </Stage>

        <Panel>
          <Tabs>
            <Tab $on aria-label="创建">{icons.create}</Tab>
            <Tab aria-label="修改">{icons.modify}</Tab>
            <Tab aria-label="层次">{icons.hierarchy}</Tab>
            <Tab aria-label="运动">{icons.motion}</Tab>
            <Tab aria-label="显示">{icons.display}</Tab>
            <Tab aria-label="实用程序">{icons.utilities}</Tab>
          </Tabs>
          <Categories>
            <Category aria-label="几何体">{icons.geometry}</Category>
            <Category $on aria-label="图形">{icons.shapes}</Category>
            <Category aria-label="灯光">{icons.lights}</Category>
            <Category aria-label="摄影机">{icons.cameras}</Category>
            <Category aria-label="辅助对象">{icons.helpers}</Category>
            <Category aria-label="空间扭曲">{icons.space}</Category>
            <Category aria-label="系统">{icons.systems}</Category>
          </Categories>
          <PanelSelect>
            <SelectBox $w={163}><Select aria-label="图形类别"><option>样条线</option></Select></SelectBox>
          </PanelSelect>

          <Rollouts>
            <Rollout title="对象类型">
              <Line as="label" $h={17} $left={34}><Check />自动栅格</Line>
              <Line $h={16} $left={34} $gap={9}>
                <Check aria-label="开始新图形" />
                <WideButton>开始新图形</WideButton>
              </Line>
              <TypeGrid>
                {shapeTypes.map(t => <TypeButton key={t} $on={t === '多边形'}>{t}</TypeButton>)}
              </TypeGrid>
            </Rollout>
            <Rollout title="名称和颜色">
              <NameRow>
                <Field aria-label="名称" $h={20} defaultValue="NGon001" />
                <Swatch aria-label="对象颜色" />
              </NameRow>
            </Rollout>
            <Rollout title="渲染" />
            <Rollout title="插值" />
            <Rollout title="创建方法">
              <RadioRow $pad="3px 0 5px 19px" $second={79}>
                <Option><Radio name="method" />边</Option>
                <Option><Radio name="method" defaultChecked />中心</Option>
              </RadioRow>
            </Rollout>
            <Rollout title="键盘输入" />
            <Rollout title="参数">
              <Param $h={24}>半径:<Field $w={54} defaultValue="200.0mm" /><Spinner /></Param>
              <RadioRow $pad="0 0 0 7px" $second={66}>
                <Option><Radio name="fit" defaultChecked />内接</Option>
                <Option><Radio name="fit" />外接</Option>
              </RadioRow>
              <Param $h={26}>边数:<Field $w={54} defaultValue="12" /><Spinner /></Param>
              <Param $h={20}>角半径:<Field $w={54} defaultValue="0.0mm" /><Spinner /></Param>
              <Line as="label" $h={24} $left={54} $gap={5}><Check />圆形</Line>
              <Line $h={6} />
            </Rollout>
          </Rollouts>
        </Panel>
      </Workspace>

      <StatusBar>
        <Listener>
          <ListenerLine $pink />
          <ListenerLine><span>--</span><span>所在行:</span><span>&lt;·</span></ListenerLine>
        </Listener>
        <Messages>
          <MessageRow>
            <Sunken>选择了 1 个 图形</Sunken>
            <Mini name="lock" label="锁定选择" w={25} />
            <IconSlot as="span" $w={4} />
            <Mini name="offset" label="偏移模式" w={18} />
            <Coord>X:<Field $w={58} $h={20} $dim defaultValue="-302.334m" /></Coord>
            <Coord>Y:<Field $w={58} $h={20} $dim defaultValue="-319.407m" /></Coord>
            <Coord>Z:<Field $w={58} $h={20} $dim defaultValue="0.0mm" /></Coord>
            <IconSlot as="span" $w={11} />
          </MessageRow>
          <MessageRow>
            <Sunken>单击并拖动以开始创建过程</Sunken>
            <Mini name="isolate" label="孤立当前选择" w={23} on />
          </MessageRow>
        </Messages>
        <GridInfo $w={100} $left={0}>
          <Sunken>栅格 = 10.0mm</Sunken>
          <Sunken>添加时间标记</Sunken>
        </GridInfo>
        <KeyButton aria-label="设置关键点">{icons.key}</KeyButton>
        <Stack $w={63} $left={4}>
          <StatusButton>自动关键点</StatusButton>
          <StatusButton>设置关键点</StatusButton>
        </Stack>
        <Stack $w={120} $left={4}>
          <SelectBox $w={120}><Select aria-label="关键点集"><option>选定对象</option></Select></SelectBox>
          <StackRow>
            <Mini name="tangent" label="默认切线" w={26} fly />
            <StatusButton>关键点过滤器...</StatusButton>
          </StackRow>
        </Stack>
        <Stack $w={126} $left={5}>
          <StackRow>
            <Mini name="start" label="转至开头" />
            <Bar />
            <Mini name="prev" label="上一帧" w={26} />
            <Mini name="play" label="播放动画" w={21} fly />
            <Mini name="next" label="下一帧" w={26} />
            <Bar />
            <Mini name="end" label="转至结尾" w={26} />
          </StackRow>
          <StackRow>
            <Mini name="keyMode" label="关键点模式" />
            <Bar />
            <Field $w={64} $h={19} aria-label="当前帧" defaultValue="0" />
            <Spinner />
            <Mini name="time" label="时间配置" w={25} />
          </StackRow>
        </Stack>
        <Stack $w={96} $left={0}>
          <StackRow>
            <Mini name="zoom" label="缩放" />
            <Mini name="zoomAll" label="缩放所有视图" />
            <Mini name="extents" label="最大化显示" fly />
            <Mini name="extentsAll" label="所有视图最大化显示" fly />
          </StackRow>
          <StackRow>
            <Mini name="region" label="缩放区域" />
            <Mini name="pan" label="平移视图" />
            <Mini name="orbit" label="环绕" fly />
            <Mini name="maximize" label="最大化视口" />
          </StackRow>
        </Stack>
      </StatusBar>

      <Callout width="350" height="210" viewBox="930 180 350 210" fill="none" stroke="#f00">
        <rect x="1127" y="191" width="32" height="51" strokeWidth="4" />
        <path d="M941 377L1120 228" strokeWidth="4" />
        <path d="M1098 233l23-5-10 20" strokeWidth="4" />
      </Callout>

      <Watermark width="240" height="124" viewBox="980 840 240 124" fill="#fff">
        <text x="981" y="917" fontFamily="Liberation Sans, sans-serif" fontWeight="700" fontSize="50">Bai</text>
        <ellipse cx="1069" cy="875" rx="8" ry="11" />
        <ellipse cx="1085" cy="859" rx="8" ry="11" />
        <ellipse cx="1106" cy="861" rx="8" ry="11" />
        <ellipse cx="1118" cy="880" rx="8" ry="11" />
        <path d="M1093 877c-10 0-12 8-19 15-6 6-10 10-8 17 3 10 12 10 18 9 6-1 12-1 18 0 7 1 16 1 19-9 2-7-2-11-8-17-8-7-10-15-20-15z" />
        <text x="1077" y="912" fontFamily="Liberation Sans, sans-serif" fontWeight="700" fontSize="27" fill="#444">du</text>
        <text x="1130" y="914" fontFamily="Noto Sans CJK SC, sans-serif" fontWeight="700" fontSize="38">经验</text>
        <text x="984" y="948" fontFamily="Noto Sans, sans-serif" fontWeight="600" fontSize="25">jingyan.baidu.com</text>
      </Watermark>
    </Page>
  );
}
